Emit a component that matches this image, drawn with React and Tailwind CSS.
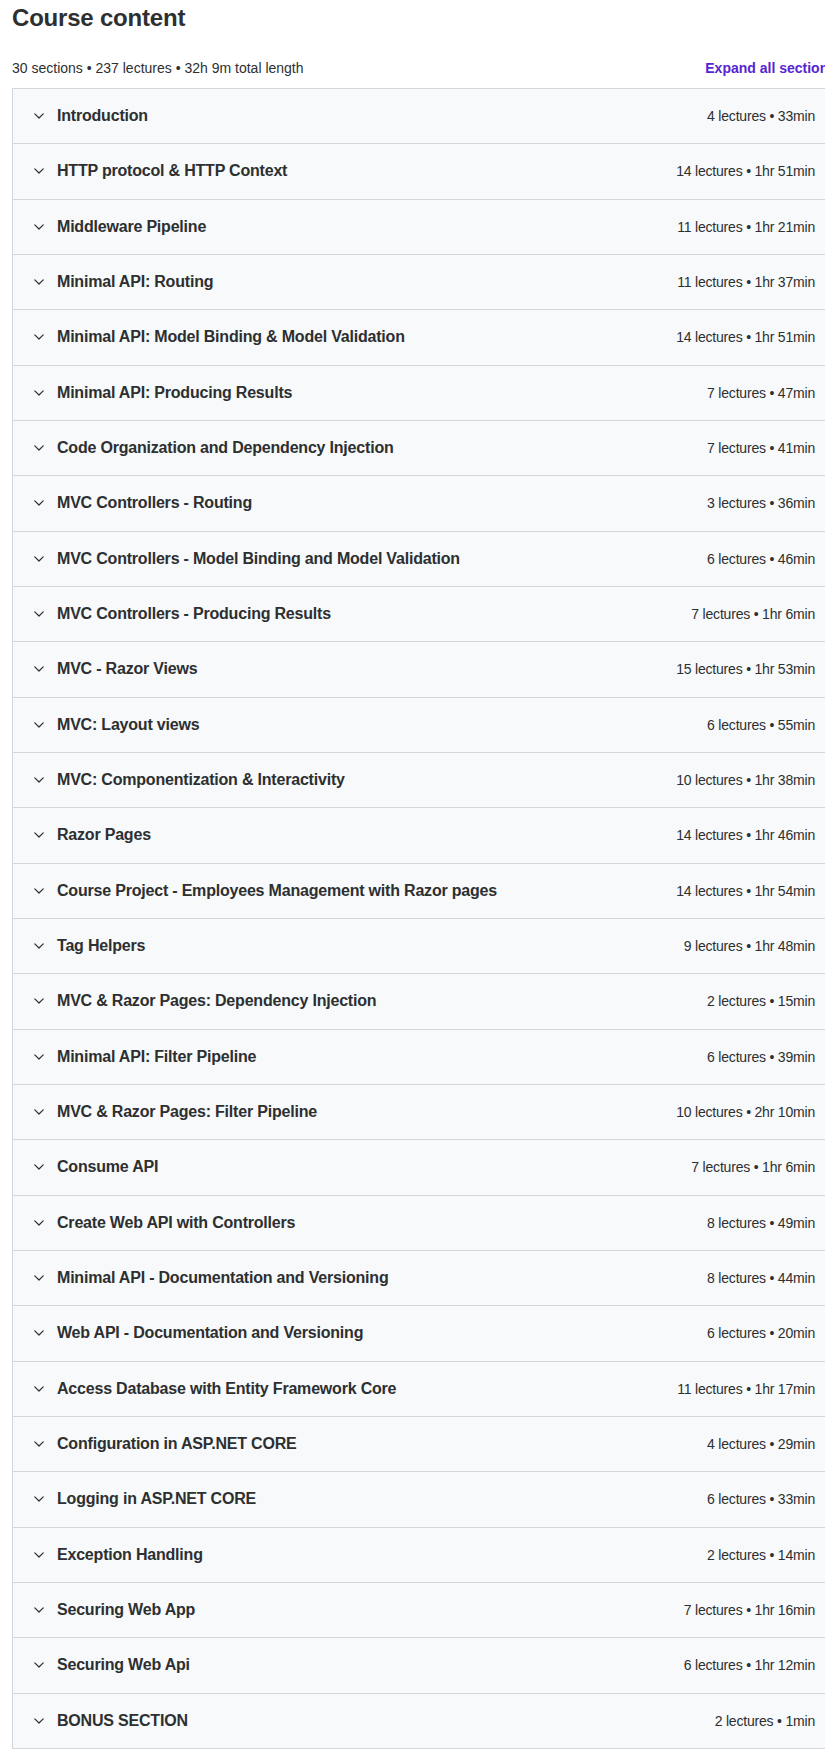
import React from "react";

const sections = [
  ["Introduction", "4 lectures • 33min"],
  ["HTTP protocol & HTTP Context", "14 lectures • 1hr 51min"],
  ["Middleware Pipeline", "11 lectures • 1hr 21min"],
  ["Minimal API: Routing", "11 lectures • 1hr 37min"],
  ["Minimal API: Model Binding & Model Validation", "14 lectures • 1hr 51min"],
  ["Minimal API: Producing Results", "7 lectures • 47min"],
  ["Code Organization and Dependency Injection", "7 lectures • 41min"],
  ["MVC Controllers - Routing", "3 lectures • 36min"],
  ["MVC Controllers - Model Binding and Model Validation", "6 lectures • 46min"],
  ["MVC Controllers - Producing Results", "7 lectures • 1hr 6min"],
  ["MVC - Razor Views", "15 lectures • 1hr 53min"],
  ["MVC: Layout views", "6 lectures • 55min"],
  ["MVC: Componentization & Interactivity", "10 lectures • 1hr 38min"],
  ["Razor Pages", "14 lectures • 1hr 46min"],
  ["Course Project - Employees Management with Razor pages", "14 lectures • 1hr 54min"],
  ["Tag Helpers", "9 lectures • 1hr 48min"],
  ["MVC & Razor Pages: Dependency Injection", "2 lectures • 15min"],
  ["Minimal API: Filter Pipeline", "6 lectures • 39min"],
  ["MVC & Razor Pages: Filter Pipeline", "10 lectures • 2hr 10min"],
  ["Consume API", "7 lectures • 1hr 6min"],
  ["Create Web API with Controllers", "8 lectures • 49min"],
  ["Minimal API - Documentation and Versioning", "8 lectures • 44min"],
  ["Web API - Documentation and Versioning", "6 lectures • 20min"],
  ["Access Database with Entity Framework Core", "11 lectures • 1hr 17min"],
  ["Configuration in ASP.NET CORE", "4 lectures • 29min"],
  ["Logging in ASP.NET CORE", "6 lectures • 33min"],
  ["Exception Handling", "2 lectures • 14min"],
  ["Securing Web App", "7 lectures • 1hr 16min"],
  ["Securing Web Api", "6 lectures • 1hr 12min"],
  ["BONUS SECTION", "2 lectures • 1min"],
];

function Chevron() {
  return (
    <svg width="10" height="6" viewBox="0 0 10 6" fill="none" className="shrink-0">
      <path d="M0.8 0.8L5 5L9.2 0.8" stroke="#2d2f31" strokeWidth="1.2" strokeLinecap="round" strokeLinejoin="round" />
    </svg>
  );
}

export default function App() {
  return (
    <div
      className="w-[825px] h-[1750px] overflow-hidden bg-white text-[#2d2f31]"
      style={{ fontFamily: "'Liberation Sans', Arial, sans-serif" }}
    >
      <div className="ml-[12px] w-[828px]">
        <h2 className="pt-[3px] text-[24px] leading-[30px] font-bold tracking-[-0.2px]">Course content</h2>
        <div className="mt-[25px] flex items-center h-[20px] text-[14px] leading-[20px]">
          <span>30 sections • 237 lectures • 32h 9m total length</span>
          <button className="ml-auto mr-[4px] font-bold text-[#5624d0] whitespace-nowrap">
            Expand all sections
          </button>
        </div>
        <div className="mt-[10px] border-t border-x border-[#d1d7dc]">
          {sections.map(([title, meta]) => (
            <div
              key={title}
              className="h-[55.33px] flex items-center bg-[#f7f9fa] border-b border-[#d1d7dc] pl-[21px] pr-[24px]"
            >
              <Chevron />
              <span className="ml-[13px] text-[16px] leading-[20px] font-bold tracking-[-0.2px] whitespace-nowrap">{title}</span>
              <span className="ml-auto text-[14px] leading-[20px] tracking-[-0.2px] whitespace-nowrap">{meta}</span>
            </div>
          ))}
        </div>
      </div>
    </div>
  );
}
